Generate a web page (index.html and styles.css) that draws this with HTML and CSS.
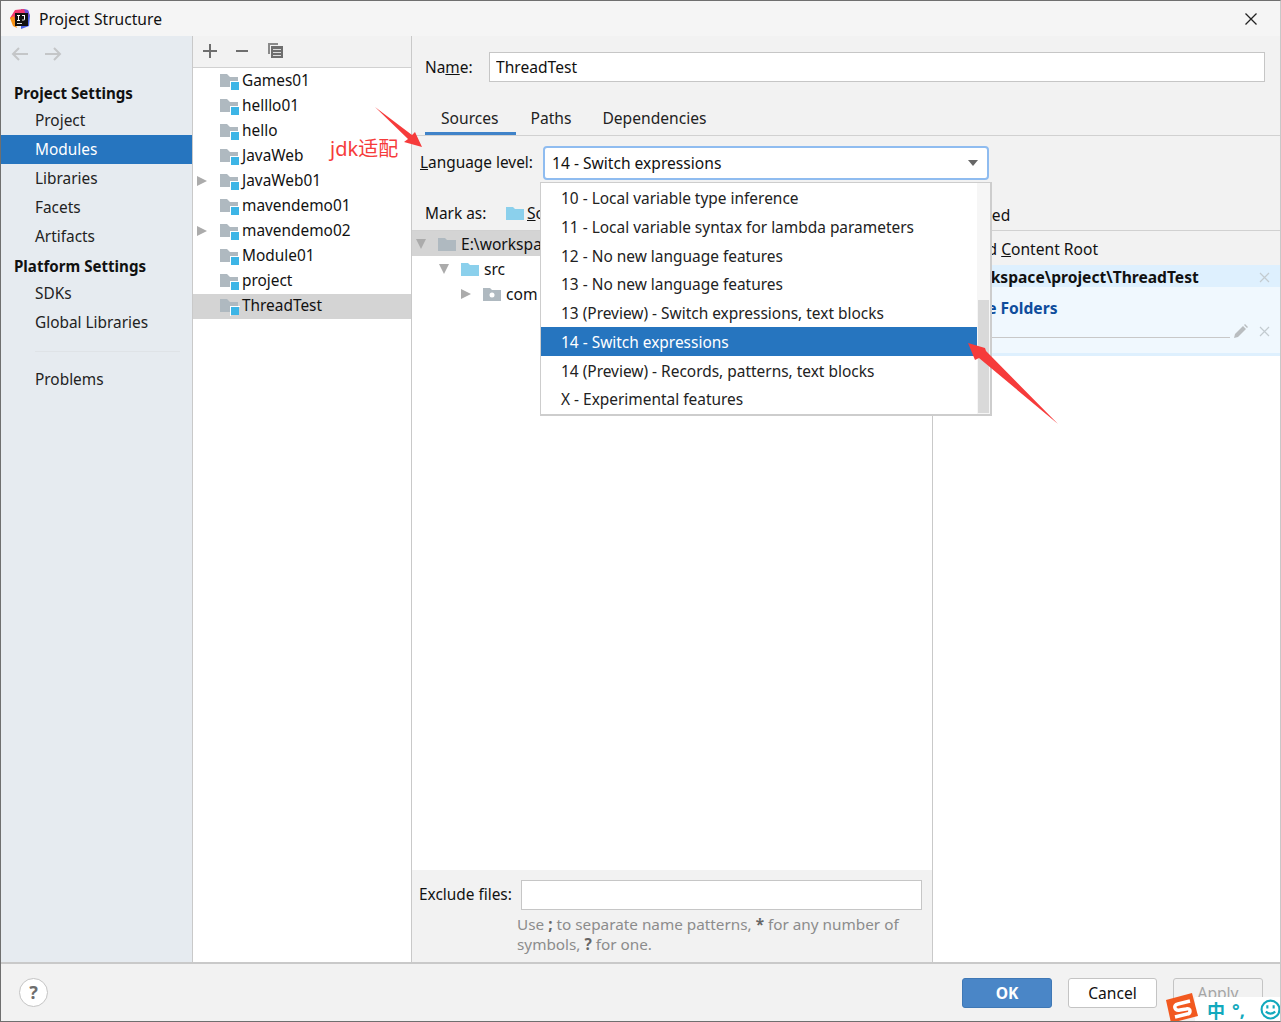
FILE: index.html
```html
<!DOCTYPE html>
<html>
<head>
	<meta charset="utf-8">
	<title>Project Structure</title>
	<link rel="stylesheet" href="styles.css">
</head>
<body>
	<svg class="defs" width="0" height="0">
		<symbol id="module" viewBox="0 0 20 18">
			<path d="M0 1h7l3 3h8v10H0z" fill="#afb9c0"/>
			<rect x="11" y="9" width="8" height="8" fill="#3db5e6"/>
			<path d="M10 8h10v1h-9v9h-1z" fill="#fff"/>
		</symbol>
		<symbol id="folder" viewBox="0 0 18 14">
			<path d="M0 1h7l2 2h9v11H0z" fill="currentColor"/>
		</symbol>
		<symbol id="cross" viewBox="0 0 11 11">
			<path d="M1 1l9 9M10 1l-9 9" stroke="#c3cbd0" stroke-width="1.200" fill="none"/>
		</symbol>
	</svg>
	<div id="window">
		<header id="titlebar">
			<svg class="logo" width="22" height="22" viewBox="0 0 22 22">
				<path d="M12 1l7 1 2 6-1 10-8 3z" fill="#4a62e6"/>
				<path d="M14 1l5 1 2 6-4 2z" fill="#6f52d8"/>
				<path d="M1 10L6 2l9-1 2 7-10 9z" fill="#f0386f"/>
				<path d="M1 10l4-2 2 9 1 3-4-2z" fill="#f89214"/>
				<rect x="6" y="5" width="13" height="13" fill="#111"/>
				<rect x="8" y="15" width="5" height="1" fill="#ddd"/>
				<path d="M8 7h3v1h-1v4h1v1H8v-1h1V8H8zM13 7h3v4q0 2-3 1.500v-1q2 .5 2-.5V8h-2z" fill="#fff"/>
			</svg>
			<span>Project Structure</span>
			<svg class="close" width="14" height="14" viewBox="0 0 14 14"><path d="M1.500 1.500l11 11M12.500 1.500l-11 11" stroke="#222" stroke-width="1.300"/></svg>
		</header>
		<div id="main">
			<nav id="sidebar">
				<div class="nav_tools">
					<svg width="18" height="14" viewBox="0 0 18 14"><path d="M17 7H2M8 1L2 7l6 6" fill="none" stroke="#c4c6c8" stroke-width="2"/></svg>
					<svg width="18" height="14" viewBox="0 0 18 14"><path d="M1 7h15M10 1l6 6-6 6" fill="none" stroke="#c4c6c8" stroke-width="2"/></svg>
				</div>
				<div class="nav_head">Project Settings</div>
				<a class="nav_item">Project</a>
				<a class="nav_item selected">Modules</a>
				<a class="nav_item">Libraries</a>
				<a class="nav_item">Facets</a>
				<a class="nav_item">Artifacts</a>
				<div class="nav_head">Platform Settings</div>
				<a class="nav_item">SDKs</a>
				<a class="nav_item">Global Libraries</a>
				<div class="nav_sep"></div>
				<a class="nav_item">Problems</a>
			</nav>
			<section id="modules">
				<div class="mod_tools">
					<svg width="14" height="14" viewBox="0 0 14 14"><path d="M7 0v14M0 7h14" stroke="#6e6e6e" stroke-width="2"/></svg>
					<svg width="14" height="14" viewBox="0 0 14 14"><path d="M1 7h12" stroke="#6e6e6e" stroke-width="2"/></svg>
					<svg width="17" height="17" viewBox="0 0 17 17"><path d="M1 12V1h10v2H3v9z" fill="#8a8a8a"/><rect x="4" y="4" width="12" height="12" fill="#6e6e6e"/><path d="M6 7h8v1H6zM6 10h8v1H6zM6 13h8v1H6z" fill="#ddd"/></svg>
				</div>
				<ul class="mod_list">
					<li><i class="arrow off"></i><svg class="mod_icon"><use href="#module"/></svg>Games01</li>
					<li><i class="arrow off"></i><svg class="mod_icon"><use href="#module"/></svg>helllo01</li>
					<li><i class="arrow off"></i><svg class="mod_icon"><use href="#module"/></svg>hello</li>
					<li><i class="arrow off"></i><svg class="mod_icon"><use href="#module"/></svg>JavaWeb</li>
					<li><i class="arrow"></i><svg class="mod_icon"><use href="#module"/></svg>JavaWeb01</li>
					<li><i class="arrow off"></i><svg class="mod_icon"><use href="#module"/></svg>mavendemo01</li>
					<li><i class="arrow"></i><svg class="mod_icon"><use href="#module"/></svg>mavendemo02</li>
					<li><i class="arrow off"></i><svg class="mod_icon"><use href="#module"/></svg>Module01</li>
					<li><i class="arrow off"></i><svg class="mod_icon"><use href="#module"/></svg>project</li>
					<li class="current"><i class="arrow off"></i><svg class="mod_icon"><use href="#module"/></svg>ThreadTest</li>
				</ul>
			</section>
			<section id="detail">
				<div class="name_row">
					<label>Na<u>m</u>e:</label>
					<input type="text" value="ThreadTest">
				</div>
				<div class="tabs">
					<span class="tab active">Sources</span>
					<span class="tab">Paths</span>
					<span class="tab">Dependencies</span>
				</div>
				<div class="lang_row">
					<label><u>L</u>anguage level:</label>
					<div class="combo">14 - Switch expressions<i class="combo_arrow"></i></div>
				</div>
				<div class="mark_row">
					<label>Mark as:</label>
					<svg class="mark_folder"><use href="#folder"/></svg>
					<span><u>S</u>ources</span>
					<span class="excluded">Excluded</span>
				</div>
				<div class="split">
					<div class="src_pane">
						<div class="src_tree">
							<div class="src_row root"><i class="arrow down"></i><svg class="tree_folder grey"><use href="#folder"/></svg>E:\workspace\project\ThreadTest</div>
							<div class="src_row lvl1"><i class="arrow down"></i><svg class="tree_folder blue"><use href="#folder"/></svg>src</div>
							<div class="src_row lvl2"><i class="arrow"></i><svg class="tree_folder grey" viewBox="0 0 18 14"><use href="#folder"/><circle cx="9" cy="8" r="2.500" fill="#fff"/></svg>com</div>
						</div>
						<div class="exclude">
							<div class="exclude_row">
								<label>Exclude files:</label>
								<input type="text">
							</div>
							<p>Use <b>;</b> to separate name patterns, <b>*</b> for any number of symbols, <b>?</b> for one.</p>
						</div>
					</div>
					<div class="root_pane">
						<div class="add_root">+ Add <u>C</u>ontent Root</div>
						<div class="root_path"><span>E:\workspace\project\ThreadTest</span><svg class="cross"><use href="#cross"/></svg></div>
						<div class="root_folders">
							<div class="folders_title">Source Folders</div>
							<div class="folders_line">
								<i></i>
								<svg width="15" height="15" viewBox="0 0 15 15"><path d="M1 14l1-4 8-8 3 3-8 8zM11 1l1-1 3 3-1 1z" fill="#b9bdc0"/></svg>
								<svg class="cross"><use href="#cross"/></svg>
							</div>
						</div>
					</div>
				</div>
			</section>
		</div>
		<footer id="buttons">
			<span class="help">?</span>
			<button class="ok">OK</button>
			<button class="cancel">Cancel</button>
			<button class="off">Apply</button>
		</footer>

		<ul id="lang_popup">
			<li>10 - Local variable type inference</li>
			<li>11 - Local variable syntax for lambda parameters</li>
			<li>12 - No new language features</li>
			<li>13 - No new language features</li>
			<li>13 (Preview) - Switch expressions, text blocks</li>
			<li class="selected">14 - Switch expressions</li>
			<li>14 (Preview) - Records, patterns, text blocks</li>
			<li>X - Experimental features</li>
			<i class="thumb"></i>
		</ul>

		<span id="jdk_note">jdk适配</span>
		<svg id="marks" width="1281" height="1022" viewBox="0 0 1281 1022">
			<path d="M375 107L412 135 415 132 422 147 404 142 408 139z" fill="#f63b3b"/>
			<path d="M1058 424L986 351 985 348 968 343 975 360 979 358z" fill="#f63b3b"/>
		</svg>

		<div id="ime">
			<svg class="ime_logo" width="34" height="30" viewBox="0 0 34 30">
				<path d="M1 7L27 0l6 23-27 7z" fill="#f2591f"/>
				<path d="M25 8l-12 3q-4 1-3 4t5 2l6-1q4-1 4 2t-3 3l-12 3" fill="none" stroke="#fff" stroke-width="3.500"/>
			</svg>
			<span class="ime_zh">中</span>
			<span class="ime_punct">°,</span>
			<svg class="ime_face" width="21" height="21" viewBox="0 0 20 20"><circle cx="10" cy="10" r="8.500" fill="none" stroke="#12a9bd" stroke-width="2"/><path d="M7 6v3M13 6v3" stroke="#12a9bd" stroke-width="2"/><path d="M5.500 12q4.500 4 9 0" fill="none" stroke="#12a9bd" stroke-width="2"/></svg>
		</div>
	</div>
</body>
</html>
```

FILE: styles.css
```css
*, *:before, *:after {
	box-sizing: border-box;
}
html, body {
	margin: 0;
	padding: 0;
	height: 100%;
	overflow: hidden;
}
body {
	font-family: "Noto Sans", "Noto Sans CJK SC", sans-serif;
	font-size: 15.600px;
	color: #111;
	background: #f2f2f2;
}
.defs {
	position: absolute;
}
ul {
	list-style: none;
	margin: 0;
	padding: 0;
}
label {
	font-size: 15.400px;
	white-space: nowrap;
}
input {
	font: inherit;
	color: inherit;
	background: #fff;
	border: 1px solid #c6c6c6;
	outline: 0;
}
#window {
	position: relative;
	display: flex;
	flex-direction: column;
	height: 1022px;
	border: 1px solid #6f6f6f;
	border-right-color: #c8c8c8;
	overflow: hidden;
}

/* title bar */
#titlebar {
	display: flex;
	align-items: center;
	height: 35px;
	flex: none;
	padding-left: 8px;
	background: #f5f5f5;
}
#titlebar span {
	margin-left: 8px;
}
.close {
	margin-left: auto;
	margin-right: 22px;
}
#main {
	display: flex;
	flex: 1;
	min-height: 0;
}

/* left nav */
#sidebar {
	width: 192px;
	flex: none;
	background: #e6ebf0;
	border-right: 1px solid #c9c9c9;
	font-size: 15.400px;
}
.nav_tools {
	display: flex;
	gap: 15px;
	height: 42px;
	padding: 11px 0 0 10px;
}
.nav_head {
	height: 28px;
	line-height: 30px;
	padding-left: 13px;
	font-size: 15.100px;
	font-weight: 700;
}
.nav_item {
	display: block;
	height: 29px;
	line-height: 29px;
	padding-left: 34px;
	color: #222;
}
.nav_item.selected {
	background: #2675bf;
	color: #fff;
}
.nav_sep {
	height: 1px;
	margin: 14px 12px 13px 34px;
	background: #dfe3e7;
}

/* module list */
#modules {
	width: 219px;
	flex: none;
	background: #fff;
	border-right: 1px solid #c9c9c9;
	font-size: 15.400px;
}
.mod_tools {
	display: flex;
	align-items: center;
	gap: 18px;
	height: 32px;
	padding: 0 0 2px 10px;
	background: #f2f2f2;
	border-bottom: 1px solid #d1d1d1;
}
.mod_list {
	padding-top: 1px;
}
.mod_list li {
	display: flex;
	align-items: center;
	height: 25px;
	padding-bottom: 2px;
}
.mod_list li.current {
	background: #d4d4d4;
}
.mod_icon {
	width: 20px;
	height: 18px;
	margin: 2px 2px 0 13px;
}
.arrow {
	display: inline-block;
	flex: none;
	width: 0;
	height: 0;
	margin-left: 4px;
	border-style: solid;
	border-width: 5.500px 0 5.500px 10px;
	border-color: transparent transparent transparent #ababab;
}
.arrow.off {
	visibility: hidden;
}
.arrow.down {
	border-width: 10px 5.500px 0 5.500px;
	border-color: #ababab transparent transparent transparent;
}

/* right side */
#detail {
	flex: 1;
	min-width: 0;
	display: flex;
	flex-direction: column;
}
.name_row {
	display: flex;
	align-items: center;
	height: 62px;
	padding: 0 15px 0 13px;
}
.name_row label {
	width: 64px;
	flex: none;
}
.name_row input {
	flex: 1;
	height: 30px;
	padding: 0 6px;
}
.tabs {
	display: flex;
	height: 38px;
	padding-left: 13px;
	border-bottom: 1px solid #d1d1d1;
}
.tab {
	height: 37px;
	line-height: 41px;
	padding: 0 17px 0 16px;
	color: #222;
}
.tab + .tab {
	padding: 0 16px 0 15px;
}
.tab.active {
	border-bottom: 3px solid #4083c9;
}
.lang_row {
	display: flex;
	align-items: center;
	height: 54px;
	padding-left: 8px;
}
.lang_row label {
	width: 123px;
	flex: none;
	margin-bottom: 2px;
}
.combo {
	position: relative;
	width: 446px;
	height: 34px;
	line-height: 30px;
	margin-bottom: 1px;
	padding-left: 7px;
	background: #fff;
	border: 2.500px solid #8fbcf0;
	border-radius: 4px;
}
.combo_arrow {
	position: absolute;
	top: 12px;
	right: 9px;
	width: 0;
	height: 0;
	border-style: solid;
	border-width: 6px 5.500px 0 5.500px;
	border-color: #666 transparent transparent transparent;
}
.mark_row {
	display: flex;
	align-items: center;
	height: 41px;
	padding: 6px 0 0 13px;
	border-bottom: 1px solid #d1d1d1;
	white-space: nowrap;
}
.mark_row label {
	width: 81px;
	flex: none;
}
.mark_folder {
	width: 18px;
	height: 14px;
	margin-right: 3px;
	color: #8bd0ec;
}
.excluded {
	margin-left: 360px;
	position: relative;
	top: 2px;
}
.split {
	flex: 1;
	display: flex;
	min-height: 0;
}
.src_pane {
	width: 521px;
	flex: none;
	display: flex;
	flex-direction: column;
	border-right: 1px solid #c9c9c9;
}
.src_tree {
	flex: 1;
	background: #fff;
}
.src_row {
	display: flex;
	align-items: center;
	height: 25px;
	white-space: nowrap;
	overflow: hidden;
}
.src_row.root {
	background: #d4d4d4;
}
.src_row.lvl1 {
	padding-left: 23px;
}
.src_row.lvl2 {
	padding-left: 45px;
}
.tree_folder {
	width: 18px;
	height: 14px;
	margin: 0 5px 0 12px;
	flex: none;
}
.tree_folder.grey {
	color: #afb9c0;
}
.tree_folder.blue {
	color: #8bd0ec;
}
.exclude {
	height: 92px;
	flex: none;
	padding: 10px 10px 0 7px;
	background: #f2f2f2;
}
.exclude_row {
	display: flex;
	align-items: center;
}
.exclude_row label {
	width: 102px;
	flex: none;
	margin-bottom: 2px;
}
.exclude_row input {
	flex: 1;
	height: 30px;
}
.exclude p {
	margin: 4px 0 0 98px;
	font-size: 15.300px;
	line-height: 20px;
	color: #8c8c8c;
}
.exclude b {
	color: #666;
}
.root_pane {
	flex: 1;
	min-width: 0;
	background: #fff;
	white-space: nowrap;
}
.add_root {
	height: 34px;
	line-height: 36px;
	padding-left: 22px;
	background: #f2f2f2;
}
.root_path {
	display: flex;
	align-items: center;
	justify-content: space-between;
	height: 22px;
	padding: 2px 10px 0 8px;
	font-weight: 700;
	background: #def0fe;
}
.root_folders {
	height: 69px;
	padding: 10px 10px 0 11px;
	background: #f0f8fe;
	border-bottom: 3px solid #def0fe;
}
.folders_title {
	font-weight: 700;
	color: #0f4d9c;
}
.folders_line {
	display: flex;
	align-items: center;
	margin-top: 5px;
	padding-left: 3px;
}
.folders_line i {
	width: 283px;
	height: 1px;
	background: #c8c8c8;
	margin: 12px 3px 0 0;
}
.cross {
	width: 11px;
	height: 11px;
	flex: none;
}
.folders_line .cross {
	margin-left: 11px;
}

/* bottom buttons */
#buttons {
	position: relative;
	display: flex;
	align-items: center;
	gap: 16px;
	height: 59px;
	flex: none;
	padding-right: 17px;
	justify-content: flex-end;
	background: #f2f2f2;
	border-top: 2px solid #c9c9c9;
}
.help {
	position: absolute;
	left: 18px;
	top: 14px;
	width: 29px;
	height: 29px;
	line-height: 26px;
	text-align: center;
	font-size: 18px;
	font-weight: 700;
	color: #6e6e6e;
	background: #fff;
	border: 1px solid #c4c4c4;
	border-radius: 50%;
}
#buttons button {
	width: 90px;
	height: 30px;
	font: inherit;
	color: #111;
	background: #fff;
	border: 1px solid #c4c4c4;
	border-radius: 3px;
}
#buttons button.cancel {
	width: 89px;
}
#buttons button.ok {
	color: #fff;
	font-weight: 700;
	background: #4a86c7;
	border-color: #3f78b5;
}
#buttons button.off {
	color: #a5a5a5;
	background: #f2f2f2;
}

/* things lying over the dialog */
#lang_popup {
	position: absolute;
	z-index: 1;
	left: 539px;
	top: 181px;
	width: 452px;
	height: 234px;
	padding: 0 13px 0 0;
	font-size: 15.450px;
	background: #fff;
	border: 2px solid #cdcdcd;
	border-top-width: 1px;
	border-left-width: 1px;
}
#lang_popup:after {
	content: '';
	position: absolute;
	top: 0;
	right: 0;
	width: 13px;
	height: 100%;
	background: #f6f6f6;
}
#lang_popup li {
	height: 28.750px;
	line-height: 30.750px;
	padding-left: 20px;
	color: #222;
}
#lang_popup li.selected {
	background: #2675bf;
	color: #fff;
}
.thumb {
	position: absolute;
	z-index: 1;
	top: 117px;
	right: 1px;
	width: 11px;
	bottom: 1px;
	background: #d9d9d9;
}
#jdk_note {
	position: absolute;
	left: 329px;
	top: 134px;
	font-size: 20px;
	line-height: 28px;
	color: #f63b3b;
}
#marks {
	position: absolute;
	z-index: 2;
	left: -1px;
	top: -1px;
	pointer-events: none;
}
#ime {
	position: absolute;
	z-index: 3;
	left: 1164px;
	top: 996px;
	width: 116px;
	height: 25px;
	display: flex;
	align-items: center;
	gap: 5px;
	background: linear-gradient(to right, transparent 30px, #fff 30px);
}
.ime_logo {
	flex: none;
	margin-top: -4px;
}
.ime_zh {
	margin-left: 3px;
	font-size: 18px;
	font-weight: 700;
	color: #12a9bd;
}
.ime_punct {
	font-size: 18px;
	font-weight: 700;
	color: #12a9bd;
	margin: 0 2px;
}
.ime_face {
	margin-left: auto;
}
```
